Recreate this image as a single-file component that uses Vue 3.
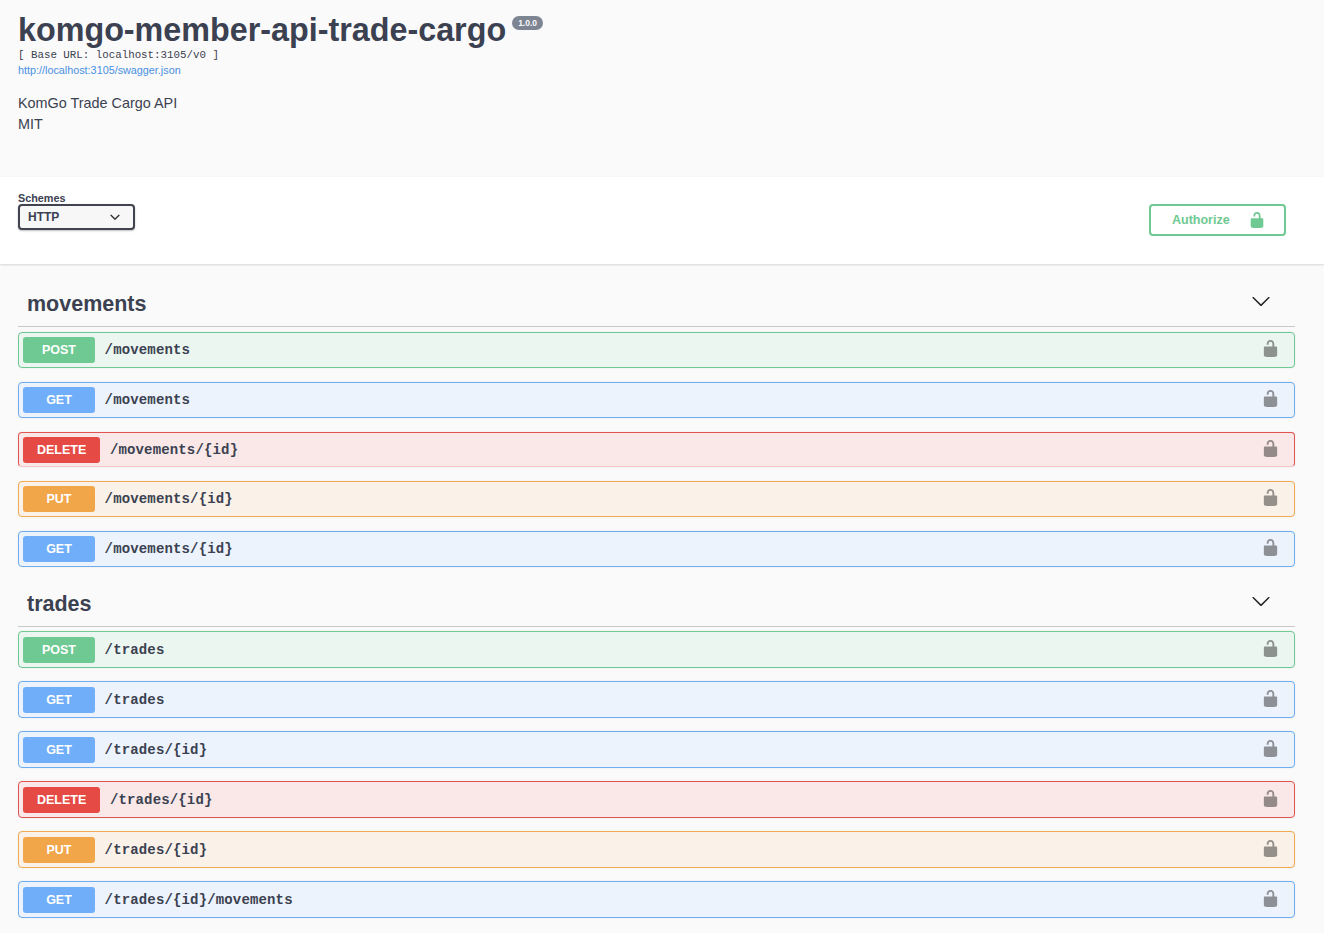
<script setup>
const lockPath = 'M15.8 8H14V5.6C14 2.703 12.665 1 10 1 7.334 1 6 2.703 6 5.6V6h2v-.801C8 3.754 8.797 3 10 3c1.203 0 2 .754 2 2.199V8H4c-.553 0-1 .646-1 1.199V17c0 .549.428 1.139.951 1.307l1.197.387C5.672 18.861 6.55 19 7.1 19h5.8c.549 0 1.428-.139 1.951-.307l1.196-.387c.524-.167.953-.757.953-1.306V9.199C17 8.646 16.352 8 15.8 8z'
const arrowPath = 'M17.418 6.109c.272-.268.709-.268.979 0s.271.701 0 .969l-7.908 7.83c-.27.268-.707.268-.979 0l-7.908-7.83c-.27-.268-.27-.701 0-.969.271-.268.709-.268.979 0L10 13.25l7.418-7.141z'

const groups = [
  {
    name: 'movements',
    ops: [
      { method: 'POST', path: '/movements' },
      { method: 'GET', path: '/movements' },
      { method: 'DELETE', path: '/movements/{id}' },
      { method: 'PUT', path: '/movements/{id}' },
      { method: 'GET', path: '/movements/{id}' },
    ],
  },
  {
    name: 'trades',
    ops: [
      { method: 'POST', path: '/trades' },
      { method: 'GET', path: '/trades' },
      { method: 'GET', path: '/trades/{id}' },
      { method: 'DELETE', path: '/trades/{id}' },
      { method: 'PUT', path: '/trades/{id}' },
      { method: 'GET', path: '/trades/{id}/movements' },
    ],
  },
]
</script>

<template>
  <div class="page">
    <header class="info">
      <div class="title-row">
        <h1 class="title">komgo-member-api-trade-cargo</h1>
        <span class="version">1.0.0</span>
      </div>
      <div class="base-url">[ Base URL: localhost:3105/v0 ]</div>
      <a class="spec-link" href="#">http://localhost:3105/swagger.json</a>
      <p class="desc">KomGo Trade Cargo API</p>
      <p class="desc">MIT</p>
    </header>

    <section class="schemes">
      <div class="scheme-picker">
        <span class="scheme-label">Schemes</span>
        <div class="scheme-select">
          <span>HTTP</span>
          <svg class="select-arrow" viewBox="0 0 20 20"><path :d="arrowPath" /></svg>
        </div>
      </div>
      <button class="authorize">
        <span>Authorize</span>
        <svg class="auth-lock" viewBox="0 0 20 20"><path :d="lockPath" /></svg>
      </button>
    </section>

    <main class="groups">
      <section v-for="group in groups" :key="group.name" class="group">
        <div class="group-head">
          <h2 class="group-name">{{ group.name }}</h2>
          <svg class="group-arrow" viewBox="0 0 20 20"><path :d="arrowPath" /></svg>
        </div>
        <div
          v-for="op in group.ops"
          :key="op.method + op.path"
          class="op"
          :class="op.method.toLowerCase()"
        >
          <span class="method">{{ op.method }}</span>
          <span class="path">{{ op.path }}</span>
          <svg class="op-lock" viewBox="0 0 20 20"><path :d="lockPath" /></svg>
        </div>
      </section>
    </main>
  </div>
</template>

<style>
html, body {
  margin: 0;
  background: #fafafa;
}
</style>

<style scoped>
.page {
  font-family: "Liberation Sans", Arial, sans-serif;
  color: #3b4151;
  background: #fafafa;
  height: 933px;
  overflow: hidden;
}

.info {
  height: 177px;
  box-sizing: border-box;
  padding: 9px 18px 0;
}

.title-row {
  display: flex;
  align-items: flex-start;
  height: 40px;
}

.title {
  margin: 0;
  font-size: 32.3px;
  line-height: 42px;
  font-weight: 700;
}

.version {
  margin: 7px 0 0 6px;
  padding: 0 6px;
  height: 14px;
  line-height: 14px;
  font-size: 8.5px;
  font-weight: 700;
  color: #fafafa;
  background: #7d8492;
  border-radius: 7px;
}

.base-url {
  font-family: "Liberation Mono", monospace;
  font-size: 10.8px;
  line-height: 12px;
}

.spec-link {
  display: block;
  margin-top: 2px;
  font-size: 10.8px;
  line-height: 14px;
  color: #4990e2;
  text-decoration: none;
}

.desc {
  margin: 0;
  font-size: 14.4px;
  line-height: 21px;
}

.spec-link + .desc {
  margin-top: 16px;
}

.schemes {
  height: 87px;
  box-sizing: border-box;
  padding: 16px 38px 0 18px;
  display: flex;
  justify-content: space-between;
  background: #fff;
  box-shadow: 0 1px 2px rgba(0, 0, 0, 0.15);
  position: relative;
}

.scheme-picker {
  display: flex;
  flex-direction: column;
}

.scheme-label {
  font-size: 10.8px;
  line-height: 11px;
  font-weight: 700;
}

.scheme-select {
  box-sizing: border-box;
  width: 117px;
  height: 26px;
  padding: 0 13px 0 8px;
  display: flex;
  align-items: center;
  justify-content: space-between;
  font-size: 12px;
  font-weight: 700;
  background: #f7f7f7;
  border: 2px solid #41444e;
  border-radius: 4px;
  box-shadow: 0 1px 2px rgba(0, 0, 0, 0.25);
}

.select-arrow {
  width: 10px;
  height: 10px;
  fill: #222;
  stroke: #222;
  stroke-width: 1.5;
}

.authorize {
  box-sizing: border-box;
  width: 137px;
  height: 32px;
  margin: 11px 0 0;
  padding: 0 18px 0 21px;
  display: flex;
  align-items: center;
  justify-content: space-between;
  font-family: inherit;
  font-size: 12.5px;
  font-weight: 700;
  color: #6fc992;
  background: transparent;
  border: 2px solid #6fc992;
  border-radius: 4px;
}

.auth-lock {
  width: 18px;
  height: 18px;
  fill: #6fc992;
}

.groups {
  padding: 0 29px 0 18px;
}

.group-head {
  box-sizing: border-box;
  height: 63px;
  display: flex;
  align-items: flex-end;
  justify-content: space-between;
  padding: 0 24px 8px 9px;
  margin-bottom: 5px;
  border-bottom: 1px solid #c9c9cc;
}

.group + .group .group-head {
  height: 46px;
  margin-bottom: 4px;
}

.group-name {
  margin: 0;
  font-size: 21.5px;
  line-height: 28px;
  font-weight: 700;
}

.group-arrow {
  width: 20px;
  height: 20px;
  margin-bottom: 7px;
  fill: #222;
}

.op {
  box-sizing: border-box;
  height: 36px;
  margin-bottom: 14px;
  padding: 0 14px 0 4px;
  display: flex;
  align-items: center;
  border: 1px solid;
  border-radius: 4px;
  box-shadow: 0 0 2px rgba(0, 0, 0, 0.08);
}

.group + .group .op {
  height: 37px;
  margin-bottom: 13px;
}

.method {
  box-sizing: border-box;
  min-width: 72px;
  height: 26px;
  padding: 0 14px;
  text-align: center;
  font-size: 12.5px;
  line-height: 26px;
  font-weight: 700;
  color: #fff;
  border-radius: 3px;
}

.path {
  margin-left: 9.6px;
  flex: 1;
  font-family: "Liberation Mono", monospace;
  font-size: 14px;
  letter-spacing: 0.15px;
  font-weight: 700;
}

.op-lock {
  width: 19px;
  height: 19px;
  margin-bottom: 3px;
  fill: #000;
  opacity: 0.4;
}

.post {
  background: #ebf6f0;
  border-color: #6fc992;
}
.post .method {
  background: #6fc992;
}

.get {
  background: #ecf3fc;
  border-color: #6eaef0;
}
.get .method {
  background: #70aef9;
}

.delete {
  background: #f9e8e7;
  border-color: #df5450;
}
.delete .method {
  background: #e64a45;
}
.group:first-child .delete {
  height: 35px;
  border-bottom-color: #f5c6c4;
}

.put {
  background: #faf1e8;
  border-color: #f2ab51;
}
.put .method {
  background: #f1a64a;
}
</style>
